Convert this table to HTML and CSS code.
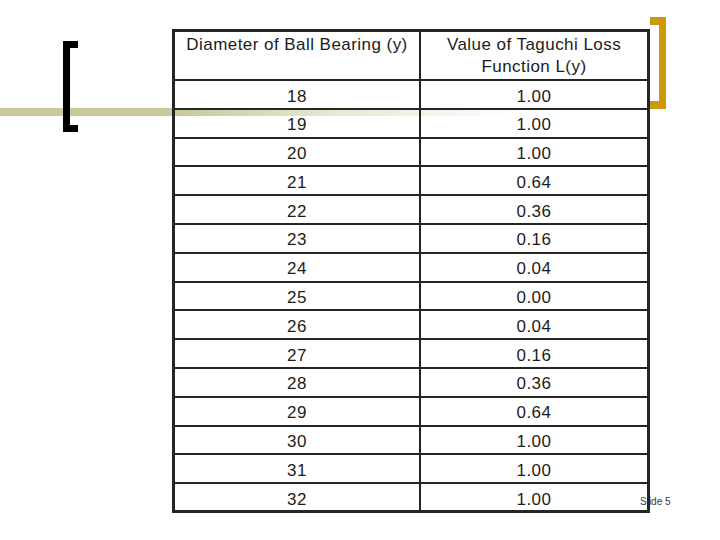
FILE: index.html
```html
<!DOCTYPE html>
<html lang="en">
<head>
<meta charset="utf-8">
<title>Taguchi Loss Function</title>
<link rel="stylesheet" href="styles.css">
</head>
<body>
<div class="slide">
  <div class="band"></div>
  <div class="bracket-left"></div>
  <div class="bracket-right"></div>
  <div class="slide-num">Slide 5</div>
  <table class="loss-table">
    <thead>
      <tr>
        <th class="c1">Diameter of Ball Bearing (y)</th>
        <th class="c2">Value of Taguchi Loss Function L(y)</th>
      </tr>
    </thead>
    <tbody>
      <tr><td class="c1">18</td><td class="c2">1.00</td></tr>
      <tr><td class="c1">19</td><td class="c2">1.00</td></tr>
      <tr><td class="c1">20</td><td class="c2">1.00</td></tr>
      <tr><td class="c1">21</td><td class="c2">0.64</td></tr>
      <tr><td class="c1">22</td><td class="c2">0.36</td></tr>
      <tr><td class="c1">23</td><td class="c2">0.16</td></tr>
      <tr><td class="c1">24</td><td class="c2">0.04</td></tr>
      <tr><td class="c1">25</td><td class="c2">0.00</td></tr>
      <tr><td class="c1">26</td><td class="c2">0.04</td></tr>
      <tr><td class="c1">27</td><td class="c2">0.16</td></tr>
      <tr><td class="c1">28</td><td class="c2">0.36</td></tr>
      <tr><td class="c1">29</td><td class="c2">0.64</td></tr>
      <tr><td class="c1">30</td><td class="c2">1.00</td></tr>
      <tr><td class="c1">31</td><td class="c2">1.00</td></tr>
      <tr class="last"><td class="c1">32</td><td class="c2">1.00</td></tr>
    </tbody>
  </table>
</div>
</body>
</html>
```
FILE: styles.css
```css
* { box-sizing: border-box; }
html, body {
  margin: 0;
  padding: 0;
  background: #ffffff;
}
.slide {
  position: relative;
  width: 720px;
  height: 540px;
  overflow: hidden;
  padding: 29px 0 0 172px;
  font-family: "Liberation Sans", Arial, sans-serif;
  color: #1c1c1c;
}
.band {
  position: absolute;
  left: 0;
  top: 108px;
  width: 720px;
  height: 8px;
  background: linear-gradient(to right, #c9c99b 0px, #c9c99b 180px, rgba(201,201,155,0.45) 330px, rgba(255,255,255,0) 520px);
  z-index: 1;
}
.bracket-left {
  position: absolute;
  left: 63px;
  top: 41px;
  width: 15px;
  height: 91px;
  border: 7px solid #000;
  border-right: none;
  z-index: 3;
}
.bracket-right {
  position: absolute;
  left: 650px;
  top: 17px;
  width: 16px;
  height: 92px;
  border: 8px solid #cc9a08;
  border-left: none;
  border-right-width: 7px;
  z-index: 3;
}
.slide-num {
  position: absolute;
  left: 640px;
  top: 496px;
  font-size: 10px;
  line-height: 12px;
  color: #3a3a3a;
  z-index: 1;
}
.loss-table {
  position: relative;
  z-index: 2;
  width: 478px;
  table-layout: fixed;
  border-collapse: separate;
  border-spacing: 0;
  border: 3px solid #262626;
  background: transparent;
  font-size: 17px;
  letter-spacing: 0.45px;
}
.loss-table th,
.loss-table td {
  padding: 5.5px 0 0 0;
  text-align: center;
  vertical-align: top;
  font-weight: normal;
  line-height: 20px;
  border-bottom: 2px solid #262626;
  height: 28.8px;
}
.loss-table th {
  height: 49px;
  padding-top: 1.5px;
  line-height: 22.6px;
}
.loss-table .c1 {
  width: 246px;
  border-right: 2px solid #262626;
}
.loss-table .c2 {
  width: 226px;
}
.loss-table th.c2 {
  padding-left: 10px;
  padding-right: 10px;
}
.loss-table tr.last td {
  border-bottom: none;
  height: 26px;
}
```
